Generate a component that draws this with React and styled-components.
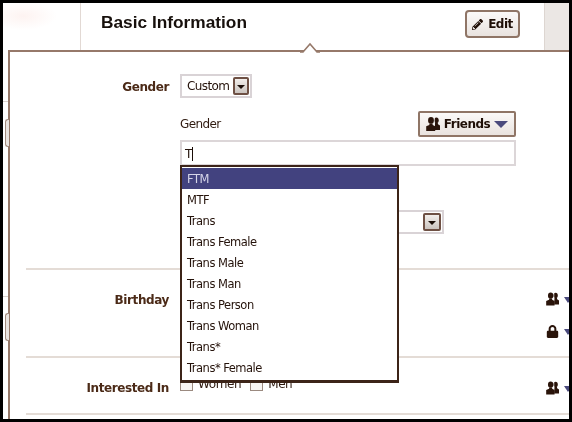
import styled, { createGlobalStyle } from "styled-components";
import { FaPencilAlt, FaLock } from "react-icons/fa";

const GlobalStyle = createGlobalStyle`
  html, body {
    margin: 0;
    background: #000;
  }
`;

const Frame = styled.div`
  position: relative;
  box-sizing: border-box;
  width: 572px;
  height: 422px;
  border: solid #000;
  border-width: 3px;
  background: #fff;
  overflow: hidden;
  color: #3a2115;
  filter: blur(0.45px);
`;

const Header = styled.header`
  display: flex;
  height: 47px;
`;

const SideColumn = styled.div`
  width: 77px;
  border-right: 1px solid #e2d9d4;
  background: radial-gradient(ellipse 34px 14px at 20px 13px, #fdf3f1, #fff);
`;

const TitleArea = styled.div`
  flex: 1;
  display: flex;
  align-items: flex-start;
  justify-content: space-between;
  padding: 7px 24px 0 20px;
`;

const Title = styled.h1`
  margin: 2px 0 0;
  font: bold 17.3px "Liberation Sans", sans-serif;
  color: #17100c;
`;

const GreyColumn = styled.div`
  width: 24px;
  background: #ebe7e4;
  border-left: 1px solid #ddd6d1;
`;

const Button = styled.button`
  display: flex;
  align-items: center;
  justify-content: center;
  gap: ${(p) => p.$gap}px;
  box-sizing: border-box;
  width: ${(p) => p.$width}px;
  height: ${(p) => p.$height}px;
  padding: 0;
  border: 2px solid #8f7566;
  border-radius: ${(p) => p.$radius}px;
  background: linear-gradient(#fbf9f8, #e9e3df);
  font: bold 12px "DejaVu Sans", sans-serif;
  letter-spacing: -0.5px;
  color: #1f0f07;
`;

const Panel = styled.main`
  position: relative;
  margin-left: 5px;
  height: 372px;
  border-top: 2px solid #96796a;
  border-left: 2px solid #96796a;
  background: #fff;
`;

const Caret = styled.svg`
  position: absolute;
  left: 290px;
  top: -11px;
`;

const GutterLine = styled.div`
  position: absolute;
  left: 0;
  top: ${(p) => p.$top}px;
  width: 5px;
  height: 1px;
  background: #d9d2ce;
`;

const Handle = styled.div`
  position: absolute;
  left: 2px;
  top: ${(p) => p.$top}px;
  box-sizing: border-box;
  width: 4px;
  height: 28px;
  border: 1px solid #a08a7e;
  border-right: none;
  border-radius: 3px 0 0 3px;
  background: #e9e3df;
`;

const Section = styled.section`
  display: grid;
  grid-template-columns: 143px 1fr auto;
  column-gap: 11px;
  box-sizing: border-box;
  height: ${(p) => p.$height}px;
  margin-left: 16px;
  padding-top: ${(p) => p.$top}px;
  border-bottom: 2px solid #e4dcd6;
`;

const Label = styled.div`
  padding-top: ${(p) => p.$offset || 0}px;
  text-align: right;
  font: bold 12px "DejaVu Sans", sans-serif;
  letter-spacing: -0.4px;
  color: #4b2a17;
`;

const Fields = styled.div`
  display: flex;
  flex-direction: column;
  align-items: flex-start;
  padding-right: 53px;
  grid-column: 2 / 4;
`;

const SelectBox = styled.div`
  display: flex;
  align-items: center;
  justify-content: flex-end;
  gap: 4px;
  box-sizing: border-box;
  width: ${(p) => p.$width}px;
  height: 24px;
  margin-top: ${(p) => p.$gap || 0}px;
  padding: 0 1px 0 5px;
  border: 2px solid #d9d3d6;
  font: 12px "DejaVu Sans", sans-serif;
  color: #24120a;
`;

const SelectText = styled.span`
  flex: 1;
  letter-spacing: -0.6px;
`;

const SelectArrow = styled.span`
  display: flex;
  align-items: flex-end;
  justify-content: center;
  box-sizing: border-box;
  width: 18px;
  height: 18px;
  padding-bottom: 4px;
  border: 2px solid #6e5044;
  border-radius: 2px;
  background: linear-gradient(#f2eeeb, #cbc4bf);

  &::after {
    content: "";
    border: 4px solid transparent;
    border-top: 4px solid #1b0e08;
    border-bottom: none;
  }
`;

const AudienceRow = styled.div`
  display: flex;
  align-items: center;
  justify-content: space-between;
  align-self: stretch;
  margin-top: 13px;
`;

const SubLabel = styled.span`
  font: 12px "DejaVu Sans", sans-serif;
  letter-spacing: -0.6px;
  color: #2f1a10;
`;

const InputWrap = styled.div`
  position: relative;
  align-self: stretch;
  margin-top: 3px;
`;

const TextBox = styled.div`
  box-sizing: border-box;
  height: 26px;
  padding: 5px 3px;
  border: 2px solid #dcd6d8;
  font: 12px "DejaVu Sans", sans-serif;
  line-height: 14px;
  color: #24120a;
`;

const Cursor = styled.span`
  border-right: 1px solid #1a0d07;
`;

const Dropdown = styled.ul`
  position: absolute;
  z-index: 2;
  top: 25px;
  left: 0;
  box-sizing: border-box;
  width: 219px;
  height: 218px;
  margin: 0;
  padding: 1px 0 0;
  list-style: none;
  background: #fff;
  border: solid #3c2418;
  border-width: 2px 2px 3px 2px;
`;

const Option = styled.li`
  height: 21px;
  padding-left: 5px;
  font: 11.5px/22px "DejaVu Sans", sans-serif;
  letter-spacing: -0.5px;
  color: ${(p) => (p.$active ? "#d5d5e8" : "#24120a")};
  background: ${(p) => (p.$active ? "#42427f" : "transparent")};
`;

const Privacy = styled.div`
  display: flex;
  flex-direction: column;
  gap: 18px;
  padding-top: ${(p) => p.$offset || 0}px;
  margin-right: -3px;
`;

const PrivacyItem = styled.div`
  display: flex;
  align-items: center;
  gap: 5px;
  height: 14px;
  width: 26px;
`;

const MenuArrow = styled.span`
  border: 4px solid transparent;
  border-top: 6px solid #4a4a7c;
  border-bottom: none;
  margin-top: 1px;
  ${(p) => p.$wide && "border-left-width: 7px; border-right-width: 7px; border-top-width: 7px;"}
`;

const CheckRow = styled.div`
  display: flex;
  align-items: center;
  gap: 5px;
  height: 16px;
  margin-top: -5px;
  font: 12px "DejaVu Sans", sans-serif;
  letter-spacing: -0.4px;
  color: #2f1a10;
`;

const CheckBox = styled.span`
  box-sizing: border-box;
  width: 13px;
  height: 13px;
  border: 1px solid #9b8a80;
  background: #f7f4f2;
`;

const CheckName = styled.span`
  margin-right: 4px;
`;

const Friends = () => (
  <svg width="14" height="14" viewBox="0 0 14 14" fill="#2a140a">
    <ellipse cx="10.4" cy="3.300" rx="2.300" ry="2.900" />
    <path d="M9 6h2.800l.2 1.300 2 1.200V13H8.500z" />
    <path d="M8.500 1v12" stroke="#fff" strokeWidth=".6" />
    <ellipse cx="5" cy="3.400" rx="2.900" ry="3.300" />
    <path d="M3.500 6.500h3l.2 1.400 2.500 1.300V14H.2V9.200l3.100-1.300z" />
  </svg>
);

const genderOptions = [
  "FTM",
  "MTF",
  "Trans",
  "Trans Female",
  "Trans Male",
  "Trans Man",
  "Trans Person",
  "Trans Woman",
  "Trans*",
  "Trans* Female",
];

export default function App() {
  return (
    <Frame>
      <GlobalStyle />
      <Header>
        <SideColumn />
        <TitleArea>
          <Title>Basic Information</Title>
          <Button $width={55} $height={28} $radius={4} $gap={5}>
            <FaPencilAlt size={11} />
            Edit
          </Button>
        </TitleArea>
        <GreyColumn />
      </Header>
      <Panel>
        <Caret width="20" height="12" viewBox="0 0 20 12">
          <path d="M0 11h3l7-8 7 8h3" fill="#fff" stroke="#96796a" strokeWidth="1.600" />
        </Caret>
        <Section $height={218} $top={22}>
          <Label $offset={6}>Gender</Label>
          <Fields>
            <SelectBox $width={72}>
              <SelectText>Custom</SelectText>
              <SelectArrow />
            </SelectBox>
            <AudienceRow>
              <SubLabel>Gender</SubLabel>
              <Button $width={98} $height={26} $radius={2} $gap={4}>
                <Friends />
                Friends
                <MenuArrow $wide />
              </Button>
            </AudienceRow>
            <InputWrap>
              <TextBox>
                <Cursor>T</Cursor>
              </TextBox>
              <Dropdown>
                {genderOptions.map((option, i) => (
                  <Option key={option} $active={i === 0}>
                    {option}
                  </Option>
                ))}
              </Dropdown>
            </InputWrap>
            <SelectBox $width={264} $gap={44}>
              <SelectText />
              <SelectArrow />
            </SelectBox>
          </Fields>
        </Section>
        <Section $height={88} $top={22}>
          <Label $offset={1}>Birthday</Label>
          <div />
          <Privacy>
            <PrivacyItem>
              <Friends />
              <MenuArrow />
            </PrivacyItem>
            <PrivacyItem>
              <FaLock size={13} color="#2a140a" />
              <MenuArrow />
            </PrivacyItem>
          </Privacy>
        </Section>
        <Section $height={57} $top={23}>
          <Label>Interested In</Label>
          <CheckRow>
            <CheckBox />
            <CheckName>Women</CheckName>
            <CheckBox />
            <CheckName>Men</CheckName>
          </CheckRow>
          <Privacy>
            <PrivacyItem>
              <Friends />
              <MenuArrow />
            </PrivacyItem>
          </Privacy>
        </Section>
      </Panel>
      <GutterLine $top={98} />
      <Handle $top={116} />
      <GutterLine $top={293} />
      <Handle $top={310} />
    </Frame>
  );
}
